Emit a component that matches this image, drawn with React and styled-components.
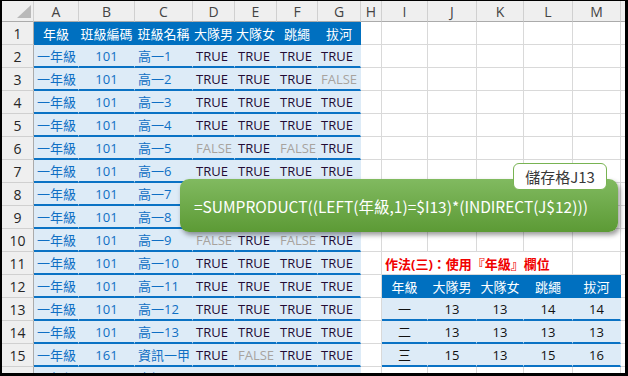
import React from 'react';
import styled, { createGlobalStyle, css } from 'styled-components';

const GlobalStyle = createGlobalStyle`
  body {
    margin: 0;
    background: #fff;
  }
`;

const COLS = ['A', 'B', 'C', 'D', 'E', 'F', 'G', 'H', 'I', 'J', 'K', 'L', 'M', ''];

const left = [
  ['101', '高一1', [1, 1, 1, 1]],
  ['101', '高一2', [1, 1, 1, 0]],
  ['101', '高一3', [1, 1, 1, 1]],
  ['101', '高一4', [1, 1, 1, 1]],
  ['101', '高一5', [0, 1, 0, 1]],
  ['101', '高一6', [1, 1, 1, 1]],
  ['101', '高一7', [1, 1, 1, 1]],
  ['101', '高一8', [1, 1, 1, 1]],
  ['101', '高一9', [0, 1, 0, 1]],
  ['101', '高一10', [1, 1, 1, 1]],
  ['101', '高一11', [1, 1, 1, 1]],
  ['101', '高一12', [1, 1, 1, 1]],
  ['101', '高一13', [1, 1, 1, 1]],
  ['161', '資訊一甲', [1, 0, 1, 1]],
  ['162', '資訊一乙', [1, 0, 1, 1]],
];

const headers = ['年級', '班級編碼', '班級名稱', '大隊男', '大隊女', '跳繩', '拔河'];
const sumHeaders = ['年級', '大隊男', '大隊女', '跳繩', '拔河'];
const sums = {
  13: ['一', 13, 13, 14, 14],
  14: ['二', 13, 13, 13, 13],
  15: ['三', 15, 13, 15, 16],
};

const Frame = styled.div`
  position: relative;
  width: 628px;
  height: 376px;
  box-sizing: border-box;
  border-style: solid;
  border-color: #000;
  border-width: 1px 3px 3px 2px;
  overflow: hidden;
  background: #fff;
`;

const Sheet = styled.div`
  display: grid;
  grid-template-columns: 32px 45px 56px 58px 42px 42px 41px 43px 21px 46px 49px 47px 49px 48px 30px;
  grid-template-rows: 21px;
  grid-auto-rows: 23px;
  font-family: "Open Sans", "Noto Sans CJK TC", sans-serif;
  font-size: 13px;
`;

const tones = {
  blue: '#0f6fc4',
  yes: '#230b35',
  no: '#a7a39e',
  black: '#111',
  white: '#fff',
  red: '#f00000',
};

const kinds = {
  plain: css``,
  col: css`
    background: #efefef;
    border-right-color: #d0d0d0;
    border-bottom-color: #ababab;
    color: #444;
    font-size: 14px;
  `,
  row: css`
    background: #efefef;
    border-right-color: #ababab;
    border-bottom-color: #d0d0d0;
    color: #262626;
    font-size: 14px;
  `,
  th: css`
    background: #0070c0;
    border-right-color: #0070c0;
    border-bottom-color: #0070c0;
  `,
  td: css`
    background: #ddebf7;
    border-right-color: #ddebf7;
    border-bottom: 2px solid #0a72c4;
  `,
};

const Cell = styled.div`
  box-sizing: border-box;
  display: flex;
  align-items: center;
  justify-content: ${(p) => (p.$align === 'left' ? 'flex-start' : 'center')};
  padding-left: ${(p) => (p.$align === 'left' ? '3px' : '0')};
  grid-column: ${(p) => (p.$span ? `span ${p.$span}` : 'auto')};
  border-right: 1px solid #d9d9d9;
  border-bottom: 1px solid #d9d9d9;
  white-space: nowrap;
  overflow: visible;
  color: ${(p) => tones[p.$tone || 'black']};
  font-weight: ${(p) => (p.$bold ? 700 : 400)};
  ${(p) => kinds[p.$kind || 'plain']}
`;

const Corner = styled(Cell)`
  justify-content: flex-end;
  align-items: flex-end;
  padding: 0 2px 3px 0;
`;

const Callout = styled.div`
  position: absolute;
  left: 178px;
  top: 178px;
  width: 438px;
  height: 53px;
  box-sizing: border-box;
  border-radius: 9px;
  background: linear-gradient(#81ba60, #5c9a35);
  box-shadow: 2px 3px 5px rgba(0, 0, 0, 0.4);
  display: flex;
  align-items: center;
  padding: 2px 0 0 14px;
  color: #fff;
  font-family: "Noto Sans CJK TC", sans-serif;
  font-size: 15.5px;
  line-height: 1;
  white-space: nowrap;
`;

const Label = styled.div`
  position: absolute;
  left: 511px;
  top: 162px;
  width: 94px;
  height: 27px;
  box-sizing: border-box;
  border: 1.5px solid #78b352;
  border-radius: 6px;
  background: #fff;
  display: flex;
  align-items: center;
  justify-content: center;
  color: #383838;
  font-family: "Noto Sans CJK TC", sans-serif;
  font-size: 15px;
  line-height: 1;
`;

const rightCells = (r) => {
  if (r === 11) {
    return [
      <Cell key="i" $span={4} $align="left" $tone="red" $bold>
        作法(三)：使用『年級』欄位
      </Cell>,
      <Cell key="m" />,
    ];
  }
  if (r === 12) {
    return sumHeaders.map((h) => (
      <Cell key={h} $kind="th" $tone="white">{h}</Cell>
    ));
  }
  if (sums[r]) {
    return sums[r].map((v, i) => (
      <Cell key={i} $kind="td">{v}</Cell>
    ));
  }
  return [0, 1, 2, 3, 4].map((i) => <Cell key={i} />);
};

const App = () => {
  const rows = [];
  for (let r = 1; r <= 16; r++) {
    const cells = [<Cell key="n" $kind="row">{r}</Cell>];
    if (r === 1) {
      headers.forEach((h) => cells.push(<Cell key={h} $kind="th" $tone="white">{h}</Cell>));
    } else {
      const [code, name, flags] = left[r - 2];
      cells.push(<Cell key="a" $kind="td" $align="left" $tone="blue">一年級</Cell>);
      cells.push(<Cell key="b" $kind="td" $tone="blue">{code}</Cell>);
      cells.push(<Cell key="c" $kind="td" $align="left" $tone="blue">{name}</Cell>);
      flags.forEach((f, i) => (
        cells.push(
          <Cell key={`f${i}`} $kind="td" $align="left" $tone={f ? 'yes' : 'no'}>
            {f ? 'TRUE' : 'FALSE'}
          </Cell>
        )
      ));
    }
    cells.push(<Cell key="h" />);
    cells.push(...rightCells(r));
    cells.push(<Cell key="z" />);
    rows.push(...cells);
  }

  return (
    <Frame>
      <GlobalStyle />
      <Sheet>
        <Corner $kind="col">
          <svg width="14" height="13" viewBox="0 0 14 13">
            <polygon points="14,0 14,13 0,13" fill="#b9b9b9" />
          </svg>
        </Corner>
        {COLS.map((c, i) => (
          <Cell key={`col${i}`} $kind="col">{c}</Cell>
        ))}
        {rows}
      </Sheet>
      <Callout>=SUMPRODUCT((LEFT(年級,1)=$I13)*(INDIRECT(J$12)))</Callout>
      <Label>儲存格J13</Label>
    </Frame>
  );
};

export default App;
